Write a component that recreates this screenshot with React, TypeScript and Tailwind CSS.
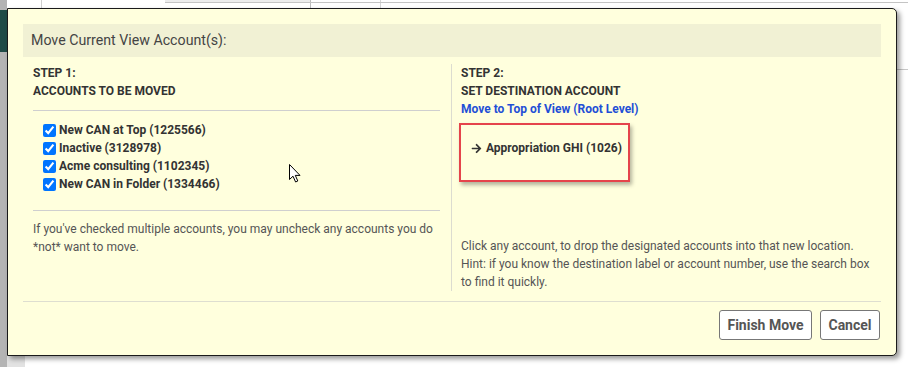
import React from 'react';
import { FaArrowRight } from 'react-icons/fa';

const accounts = [
  'New CAN at Top (1225566)',
  'Inactive (3128978)',
  'Acme consulting (1102345)',
  'New CAN in Folder (1334466)',
];

const Pointer: React.FC = () => (
  <svg
    className="absolute left-[289px] top-[164px] z-20"
    width="13"
    height="19"
    viewBox="0 0 13 19"
  >
    <path
      d="M0.5 0.5 L0.5 15.5 L4 12.2 L6.6 18 L8.8 17 L6.3 11.4 L11 11.4 Z"
      fill="#fff"
      stroke="#000"
      strokeWidth="1"
      strokeLinejoin="round"
    />
  </svg>
);

const BackgroundPage: React.FC = () => (
  <>
    {/* page behind the dialog */}
    <div className="absolute left-0 top-0 h-full w-[7px] bg-[#b4b4b4]" />
    <div className="absolute left-0 top-[10px] h-[42px] w-[7px] bg-[#1f4b47]" />
    <div className="absolute left-[7px] top-[356px] h-[11px] w-[18px] bg-[#e2e2e2]" />
    <div className="absolute left-[41px] top-0 h-[8px] w-px bg-[#cfcfcf]" />
    <div className="absolute left-[165px] top-0 h-[3px] w-[145px] bg-[#ececec]" />
    <div className="absolute left-[310px] top-0 h-[8px] w-px bg-[#bdbdbd]" />
    <div className="absolute left-[380px] top-0 h-[8px] w-px bg-[#d5d5d5]" />
    <div className="absolute left-[165px] top-[2px] h-px w-[743px] bg-[#c4c4c4]" />
    <div className="absolute left-[896px] top-[69px] h-px w-[12px] bg-[#c8c8c8]" />
  </>
);

export default function App() {
  return (
    <div
      className="relative h-[367px] w-[908px] overflow-hidden bg-white pl-[7px] pt-[8px]"
      style={{ fontFamily: 'Roboto, "Liberation Sans", sans-serif' }}
    >
      <BackgroundPage />
      <Pointer />

      <div className="relative z-10 flex h-[348px] w-[890px] flex-col rounded-r-[5px] border border-[#1a1a1a] bg-[#ffffdd] px-[15px] pt-[15px] shadow-[3px_3px_5px_rgba(0,0,0,0.4)]">
        <div className="flex h-[33px] items-center bg-[#f1f1d4] pl-[8px] text-[14.2px] text-[#444]">
          Move Current View Account(s):
        </div>

        <div className="mt-[7px] grid h-[227px] grid-cols-2 text-[12px] leading-[18px]">
          {/* step 1 */}
          <div className="border-r border-[#dcdcd0] pl-[10px] pr-[11px]">
            <div className="font-bold text-[#333]">STEP 1:</div>
            <div className="font-bold text-[#333]">ACCOUNTS TO BE MOVED</div>
            <div className="mt-[10px] border-t border-[#cfcfcf]" />
            <div className="mt-[10px] pl-[10px]">
              {accounts.map((a) => (
                <label key={a} className="flex h-[18px] items-center font-bold text-[#333]">
                  <input
                    type="checkbox"
                    defaultChecked
                    className="m-0 mr-[3px] h-[13px] w-[13px] accent-[#0075ff]"
                  />
                  {a}
                </label>
              ))}
            </div>
            <div className="mt-[17px] border-t border-[#cfcfcf]" />
            <p className="mt-[9px] text-[#555]">
              If you've checked multiple accounts, you may uncheck any accounts you do *not* want
              to move.
            </p>
          </div>

          {/* step 2 */}
          <div className="flex flex-col pl-[9px] pr-[10px]">
            <div className="font-bold text-[#333]">STEP 2:</div>
            <div className="font-bold text-[#333]">SET DESTINATION ACCOUNT</div>
            <a className="cursor-pointer font-bold text-[#1f4fd6]">Move to Top of View (Root Level)</a>
            <div className="-ml-[2px] mt-[5px] h-[59px] w-[171px] border-2 border-[#e5444b] pl-[10px] pt-[14px] shadow-[2px_3px_4px_rgba(0,0,0,0.3)]">
              <div className="flex items-center font-bold text-[#333]">
                <FaArrowRight className="mr-[4px] h-[11px] w-[11px]" />
                Appropriation GHI (1026)
              </div>
            </div>
            <p className="mt-auto text-[#555]">
              Click any account, to drop the designated accounts into that new location.
              <br />
              Hint: if you know the destination label or account number, use the search box to
              find it quickly.
            </p>
          </div>
        </div>

        <div className="mt-[10px] border-t border-[#deded0]" />
        <div className="mt-[8px] flex justify-end gap-[8px] pr-px">
          <button className="h-[30px] w-[93px] rounded-[3px] border border-[#777] bg-white text-[14px] font-bold text-[#555]">
            Finish Move
          </button>
          <button className="h-[30px] w-[60px] rounded-[3px] border border-[#777] bg-white text-[14px] font-bold text-[#555]">
            Cancel
          </button>
        </div>
      </div>
    </div>
  );
}
